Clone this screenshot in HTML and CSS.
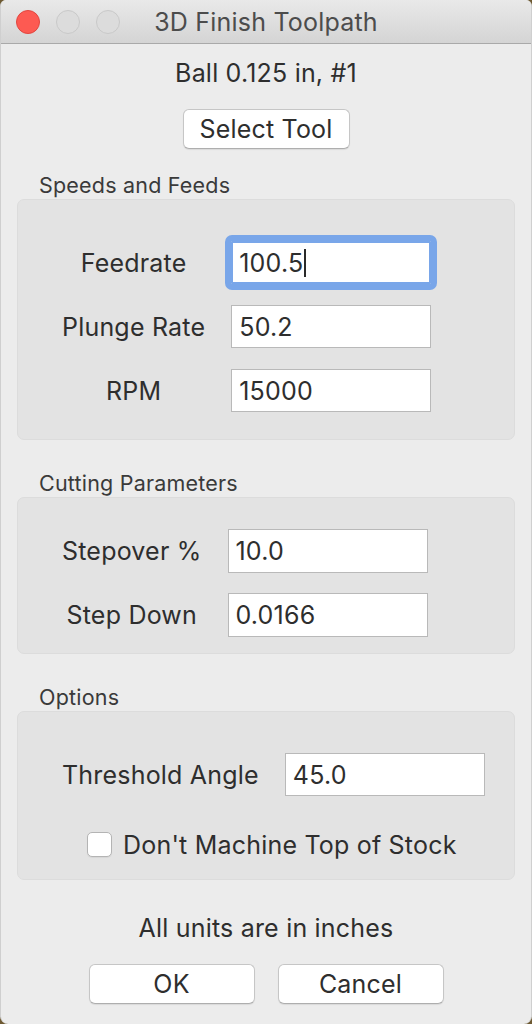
FILE: index.html
```html
<!DOCTYPE html>
<html lang="en">
<head>
<meta charset="utf-8">
<title>3D Finish Toolpath</title>
<link rel="stylesheet" href="styles.css">
</head>
<body>
<div class="window">
  <header class="titlebar">
    <div class="lights">
      <span class="light close"></span>
      <span class="light"></span>
      <span class="light"></span>
    </div>
    <div class="title">3D Finish Toolpath</div>
  </header>

  <main class="content">
    <div class="subtitle">Ball 0.125 in, #1</div>
    <div class="center-row"><button class="btn btn-select">Select Tool</button></div>

    <div class="section-label label-speeds">Speeds and Feeds</div>
    <section class="group group-speeds">
      <div class="form-grid rows-speeds">
        <span class="field-label">Feedrate</span>
        <div class="field focused">100.5<span class="caret"></span></div>
        <span class="field-label">Plunge Rate</span>
        <div class="field">50.2</div>
        <span class="field-label">RPM</span>
        <div class="field">15000</div>
      </div>
    </section>

    <div class="section-label">Cutting Parameters</div>
    <section class="group group-cutting">
      <div class="form-grid rows-cutting">
        <span class="field-label">Stepover %</span>
        <div class="field tall">10.0</div>
        <span class="field-label">Step Down</span>
        <div class="field tall">0.0166</div>
      </div>
    </section>

    <div class="section-label">Options</div>
    <section class="group group-options">
      <div class="form-grid">
        <span class="field-label">Threshold Angle</span>
        <div class="field">45.0</div>
      </div>
      <label class="check-row">
        <span class="checkbox"></span>
        <span>Don't Machine Top of Stock</span>
      </label>
    </section>

    <div class="note">All units are in inches</div>
    <div class="buttons">
      <button class="btn btn-action">OK</button>
      <button class="btn btn-action">Cancel</button>
    </div>
  </main>
</div>
</body>
</html>
```

FILE: styles.css
```css
* { box-sizing: border-box; }

html, body {
  margin: 0;
  padding: 0;
  background: #6e5a32;
}

body {
  font-family: Inter, "Noto Sans", "Liberation Sans", sans-serif;
  color: #2e2e2e;
  letter-spacing: 0.2px;
}

.window {
  width: 532px;
  height: 1024px;
  background: #ececec;
  border-radius: 6px 6px 8px 8px;
  border-left: 1px solid #cfcfcf;
  border-right: 1px solid #cfcfcf;
  overflow: hidden;
}

.titlebar {
  height: 44px;
  border-bottom: 1px solid #a9a9a9;
  background: linear-gradient(#e9e9e9, #d4d4d4);
  display: flex;
  align-items: center;
  position: relative;
}

.lights {
  display: flex;
  gap: 16px;
  padding-left: 15px;
}

.light {
  width: 24px;
  height: 24px;
  border-radius: 50%;
  background: #dcdcdc;
  border: 1px solid #c9c9c9;
}

.light.close {
  background: #fd5a52;
  border-color: #e2463f;
}

.title {
  position: absolute;
  left: 0;
  right: 0;
  text-align: center;
  font-size: 25px;
  color: #4c4c4c;
  pointer-events: none;
}

.content {
  display: flex;
  flex-direction: column;
}

.subtitle {
  margin-top: 14px;
  height: 30px;
  line-height: 30px;
  text-align: center;
  font-size: 25px;
}

.center-row {
  display: flex;
  justify-content: center;
  margin-top: 21px;
}

.btn {
  font-family: inherit;
  font-size: 25px;
  letter-spacing: 0.2px;
  color: #2e2e2e;
  background: #ffffff;
  border: 1px solid #c6c6c6;
  border-bottom-color: #aeaeae;
  border-radius: 6px;
  height: 40px;
  padding: 0;
  box-shadow: 0 1px 1px rgba(0, 0, 0, 0.08);
}

.btn-select {
  width: 167px;
}

.section-label {
  margin-top: 30px;
  margin-bottom: 1px;
  padding-left: 38px;
  height: 26px;
  line-height: 26px;
  font-size: 21.5px;
  color: #3a3a3a;
}

.label-speeds {
  margin-top: 23px;
}

.group {
  margin: 0 16px;
  background: #e3e3e3;
  border: 1px solid #dcdcdc;
  border-radius: 7px;
}

.group-speeds {
  padding: 41px 0 27px 44px;
}

.group-cutting {
  padding: 31px 0 16px 44px;
}

.group-options {
  padding: 41px 0 22px 44px;
}

.form-grid {
  display: grid;
  grid-template-columns: auto 200px;
  column-gap: 26px;
  align-items: center;
  justify-items: center;
  justify-content: start;
}

.rows-speeds { row-gap: 21px; }
.rows-cutting { row-gap: 20px; }

.field-label {
  font-size: 25px;
  color: #2e2e2e;
}

.field {
  justify-self: stretch;
  height: 43px;
  background: #ffffff;
  border: 1px solid #b9b9b9;
  padding-left: 7px;
  font-size: 25px;
  color: #2e2e2e;
  display: flex;
  align-items: center;
}

.field.tall {
  height: 44px;
}

.field.focused {
  border: 2px solid #79a6e9;
  border-radius: 1px;
  outline: 6px solid #79a6e9;
  padding-left: 6px;
}

.caret {
  display: inline-block;
  width: 2px;
  height: 28px;
  background: #2a2a2a;
  margin-left: 1px;
}

.check-row {
  margin-top: 36px;
  margin-left: 25px;
  display: flex;
  align-items: center;
  gap: 11px;
  font-size: 25px;
  color: #2e2e2e;
  height: 25px;
}

.checkbox {
  width: 25px;
  height: 25px;
  background: #ffffff;
  border: 1px solid #b4b4b4;
  border-radius: 5px;
  box-shadow: 0 1px 1px rgba(0, 0, 0, 0.06);
}

.note {
  margin-top: 33px;
  height: 30px;
  line-height: 30px;
  text-align: center;
  font-size: 25px;
}

.buttons {
  margin-top: 21px;
  display: flex;
  justify-content: center;
  gap: 23px;
}

.btn-action {
  width: 166px;
}
```
